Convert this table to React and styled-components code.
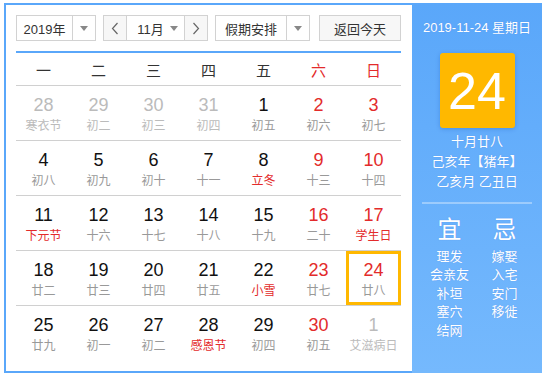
import React from 'react';
import styled, { createGlobalStyle } from 'styled-components';

const GlobalStyle = createGlobalStyle`
  body {
    margin: 0;
    background: #fff;
    font-family: "Liberation Sans", "Noto Sans CJK SC", sans-serif;
  }
`;

const Frame = styled.div`
  display: flex;
  width: 538px;
  height: 370px;
  margin: 3px 0 0 4px;
`;

const Main = styled.div`
  width: 408px;
  box-sizing: border-box;
  border: 2px solid #5aa7fa;
  border-right: none;
  padding: 10px 11px 0 10px;
  background: #fff;
`;

const Toolbar = styled.div`
  display: flex;
  align-items: center;
  gap: 7px;
  height: 26px;
`;

const Select = styled.div`
  display: flex;
  height: 26px;
  box-sizing: border-box;
  border: 1px solid #d2d2d2;
  background: #fff;
  color: #333;
  font-size: 13px;
`;

const SelectText = styled.div`
  width: ${p => p.$w}px;
  display: flex;
  align-items: center;
  justify-content: center;
`;

const Arrow = styled.div`
  width: 22px;
  display: flex;
  align-items: center;
  justify-content: center;
  border-left: 1px solid #d2d2d2;
  &::after {
    content: '';
    border-left: 4px solid transparent;
    border-right: 4px solid transparent;
    border-top: 5px solid #888;
  }
`;

const MonthInner = styled.div`
  width: 59px;
  display: flex;
  align-items: center;
  justify-content: center;
  gap: 6px;
  border-left: 1px solid #d2d2d2;
  border-right: 1px solid #d2d2d2;
  padding-left: 4px;
  box-sizing: border-box;
`;

const Caret = styled.span`
  border-left: 4px solid transparent;
  border-right: 4px solid transparent;
  border-top: 5px solid #888;
`;

const StepButton = styled.div`
  width: 22px;
  display: flex;
  align-items: center;
  justify-content: center;
  background: #f7f7f7;
`;

const TodayButton = styled.div`
  margin-left: auto;
  width: 82px;
  height: 26px;
  box-sizing: border-box;
  border: 1px solid #d2d2d2;
  background: #f7f7f7;
  color: #333;
  font-size: 13px;
  display: flex;
  align-items: center;
  justify-content: center;
`;

const Grid = styled.div`
  margin-top: 10px;
  border-top: 2px solid #5aa7fa;
  display: grid;
  grid-template-columns: repeat(7, 55px);
`;

const WeekDay = styled.div`
  height: 32px;
  display: flex;
  align-items: center;
  justify-content: center;
  font-size: 15px;
  color: ${p => (p.$weekend ? '#e32b2b' : '#333')};
`;

const Cell = styled.div`
  height: 55px;
  box-sizing: border-box;
  border-top: 1px solid #d0d0d0;
  padding-top: 9px;
  text-align: center;
  box-shadow: ${p => (p.$selected ? 'inset 0 0 0 3px #ffb800' : 'none')};
`;

const DayNum = styled.div`
  font-size: 18px;
  line-height: 20px;
  color: ${p => (p.$other ? '#bbb' : p.$weekend ? '#e32b2b' : '#111')};
`;

const Lunar = styled.div`
  margin-top: 3px;
  font-size: 12px;
  line-height: 16px;
  white-space: nowrap;
  color: ${p => (p.$other ? '#bbb' : p.$fest ? '#e32b2b' : '#999')};
`;

const Side = styled.div`
  width: 130px;
  height: 370px;
  background: linear-gradient(180deg, #5aa7fa 0%, #75b9fd 100%);
  color: #fff;
  display: flex;
  flex-direction: column;
  align-items: center;
  padding-top: 15px;
  box-sizing: border-box;
  text-shadow: 0 0 1px rgba(60, 90, 200, 0.35);
`;

const SideDate = styled.div`
  font-size: 13px;
  line-height: 20px;
`;

const BigDay = styled.div`
  margin-top: 15px;
  width: 75px;
  height: 75px;
  border-radius: 3px;
  background: #ffb800;
  box-shadow: 0 1px 4px rgba(0, 60, 160, 0.25);
  display: flex;
  align-items: center;
  justify-content: center;
  font-size: 52px;
  text-shadow: none;
`;

const LunarInfo = styled.div`
  margin-top: 4px;
  font-size: 13px;
  line-height: 20px;
  text-align: center;
`;

const Divider = styled.div`
  margin-top: 10px;
  width: 110px;
  height: 2px;
  background: rgba(255, 255, 255, 0.35);
`;

const Advice = styled.div`
  margin-top: 11px;
  width: 110px;
  display: grid;
  grid-template-columns: 55px 55px;
`;

const AdviceCol = styled.div`
  display: flex;
  flex-direction: column;
  align-items: center;
`;

const AdviceTitle = styled.div`
  font-size: 24px;
  line-height: 30px;
  margin-bottom: 3px;
`;

const AdviceItem = styled.div`
  font-size: 13px;
  line-height: 18.4px;
  white-space: nowrap;
`;

const Chevron = ({ dir }) => (
  <svg width="8" height="13" viewBox="0 0 8 13">
    <path
      d={dir === 'left' ? 'M6.5 1 L1.5 6.5 L6.5 12' : 'M1.5 1 L6.5 6.5 L1.5 12'}
      fill="none"
      stroke="#666"
      strokeWidth="1.2"
    />
  </svg>
);

const weekNames = ['一', '二', '三', '四', '五', '六', '日'];

const days = [
  [28, '寒衣节', 'o'], [29, '初二', 'o'], [30, '初三', 'o'], [31, '初四', 'o'], [1, '初五'], [2, '初六'], [3, '初七'],
  [4, '初八'], [5, '初九'], [6, '初十'], [7, '十一'], [8, '立冬', 'f'], [9, '十三'], [10, '十四'],
  [11, '下元节', 'f'], [12, '十六'], [13, '十七'], [14, '十八'], [15, '十九'], [16, '二十'], [17, '学生日', 'f'],
  [18, '廿二'], [19, '廿三'], [20, '廿四'], [21, '廿五'], [22, '小雪', 'f'], [23, '廿七'], [24, '廿八', 's'],
  [25, '廿九'], [26, '初一'], [27, '初二'], [28, '感恩节', 'f'], [29, '初四'], [30, '初五'], [1, '艾滋病日', 'o'],
];

const good = ['理发', '会亲友', '补垣', '塞穴', '结网'];
const bad = ['嫁娶', '入宅', '安门', '移徙'];

export default function App() {
  return (
    <>
      <GlobalStyle />
      <Frame>
        <Main>
          <Toolbar>
            <Select>
              <SelectText $w={55}>2019年</SelectText>
              <Arrow />
            </Select>
            <Select>
              <StepButton><Chevron dir="left" /></StepButton>
              <MonthInner>11月<Caret /></MonthInner>
              <StepButton><Chevron dir="right" /></StepButton>
            </Select>
            <Select>
              <SelectText $w={70}>假期安排</SelectText>
              <Arrow />
            </Select>
            <TodayButton>返回今天</TodayButton>
          </Toolbar>

          <Grid>
            {weekNames.map((w, i) => (
              <WeekDay key={w} $weekend={i >= 5}>{w}</WeekDay>
            ))}
            {days.map(([n, lunar, flag], i) => {
              const weekend = i % 7 >= 5;
              return (
                <Cell key={i} $selected={flag === 's'}>
                  <DayNum $other={flag === 'o'} $weekend={weekend}>{n}</DayNum>
                  <Lunar $other={flag === 'o'} $fest={flag === 'f'}>{lunar}</Lunar>
                </Cell>
              );
            })}
          </Grid>
        </Main>

        <Side>
          <SideDate>2019-11-24 星期日</SideDate>
          <BigDay>24</BigDay>
          <LunarInfo>
            十月廿八<br />
            己亥年【猪年】<br />
            乙亥月 乙丑日
          </LunarInfo>
          <Divider />
          <Advice>
            <AdviceCol>
              <AdviceTitle>宜</AdviceTitle>
              {good.map(g => <AdviceItem key={g}>{g}</AdviceItem>)}
            </AdviceCol>
            <AdviceCol>
              <AdviceTitle>忌</AdviceTitle>
              {bad.map(b => <AdviceItem key={b}>{b}</AdviceItem>)}
            </AdviceCol>
          </Advice>
        </Side>
      </Frame>
    </>
  );
}
